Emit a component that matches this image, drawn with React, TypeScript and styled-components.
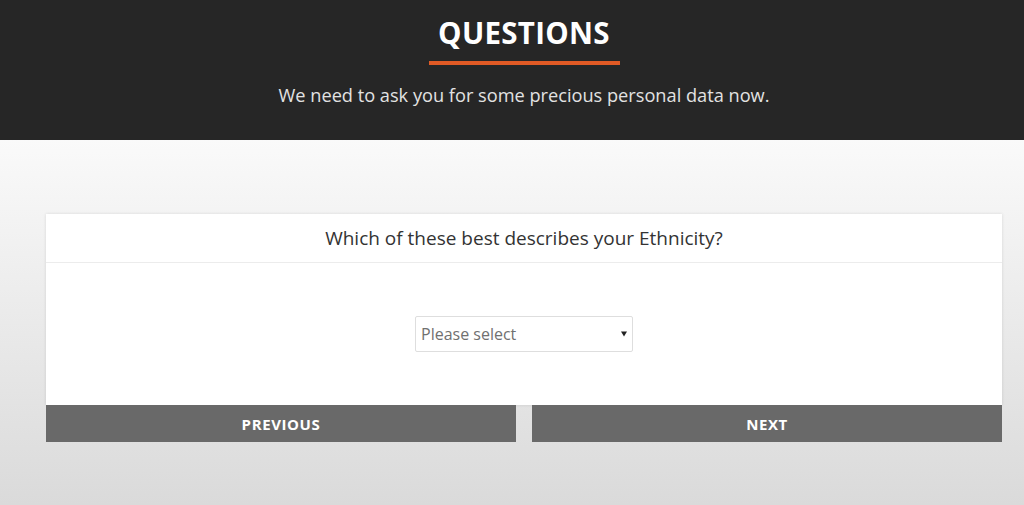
import React from 'react';
import styled, { createGlobalStyle } from 'styled-components';

const GlobalStyle = createGlobalStyle`
    html, body {
        margin: 0;
        padding: 0;
        height: 100%;
    }

    body {
        font-family: 'Open Sans', 'Liberation Sans', sans-serif;
        background: #dcdcdc;
    }

    #root {
        min-height: 100%;
    }
`;

const Page = styled.div`
    display: flex;
    flex-direction: column;
    width: 100%;
    height: 505px;
    background: linear-gradient(180deg, #fbfbfb 0px, #fafafa 140px, #dadada 505px);
    overflow: hidden;
`;

const Hero = styled.header`
    display: flex;
    flex-direction: column;
    align-items: center;
    height: 140px;
    box-sizing: border-box;
    padding: 14px 0 0 24px;
    background: #262626;
`;

const Title = styled.h1`
    margin: 0;
    font-family: 'Open Sans', 'Liberation Sans', sans-serif;
    font-weight: 700;
    font-size: 29.5px;
    line-height: 38px;
    color: #ffffff;
    letter-spacing: 0.01em;
`;

const Accent = styled.div`
    width: 191px;
    height: 4px;
    margin-top: 9px;
    background: #e05a25;
`;

const Subtitle = styled.p`
    margin: 18px 0 0;
    font-size: 18.2px;
    line-height: 24px;
    color: #e2e2e2;
`;

const Main = styled.main`
    display: flex;
    flex-direction: column;
    padding: 74px 22px 0 46px;
`;

const Card = styled.section`
    display: flex;
    flex-direction: column;
    background: #ffffff;
    box-shadow: 0 0 3px rgba(0, 0, 0, 0.12);
`;

const Question = styled.div`
    display: flex;
    justify-content: center;
    align-items: center;
    height: 48px;
    border-bottom: 1px solid #ececec;
    font-size: 19px;
    color: #333333;
`;

const Body = styled.div`
    display: flex;
    justify-content: center;
    align-items: center;
    height: 142px;
`;

const Select = styled.div`
    position: relative;
    display: flex;
    align-items: center;
    width: 218px;
    height: 36px;
    box-sizing: border-box;
    padding: 0 5px;
    border: 1px solid #dedede;
    border-radius: 2px;
    font-size: 16px;
    color: #707070;
    background: #ffffff;
`;

const Caret = styled.span`
    position: absolute;
    right: 5px;
    top: 50%;
    transform: translateY(-50%);
    width: 0;
    height: 0;
    border-left: 3px solid transparent;
    border-right: 3px solid transparent;
    border-top: 5px solid #222222;
`;

const Nav = styled.div`
    display: grid;
    grid-template-columns: 1fr 1fr;
    gap: 16px;
`;

const NavButton = styled.button`
    height: 37px;
    border: none;
    background: #696969;
    color: #ffffff;
    font-family: 'Open Sans', 'Liberation Sans', sans-serif;
    font-weight: 700;
    font-size: 15px;
    letter-spacing: 0.04em;
    cursor: pointer;
`;

export default function App() {
    return (
        <>
            <GlobalStyle />
            <Page>
                <Hero>
                    <Title>QUESTIONS</Title>
                    <Accent />
                    <Subtitle>We need to ask you for some precious personal data now.</Subtitle>
                </Hero>
                <Main>
                    <Card>
                        <Question>Which of these best describes your Ethnicity?</Question>
                        <Body>
                            <Select>
                                Please select
                                <Caret />
                            </Select>
                        </Body>
                    </Card>
                    <Nav>
                        <NavButton type="button">PREVIOUS</NavButton>
                        <NavButton type="button">NEXT</NavButton>
                    </Nav>
                </Main>
            </Page>
        </>
    );
}
